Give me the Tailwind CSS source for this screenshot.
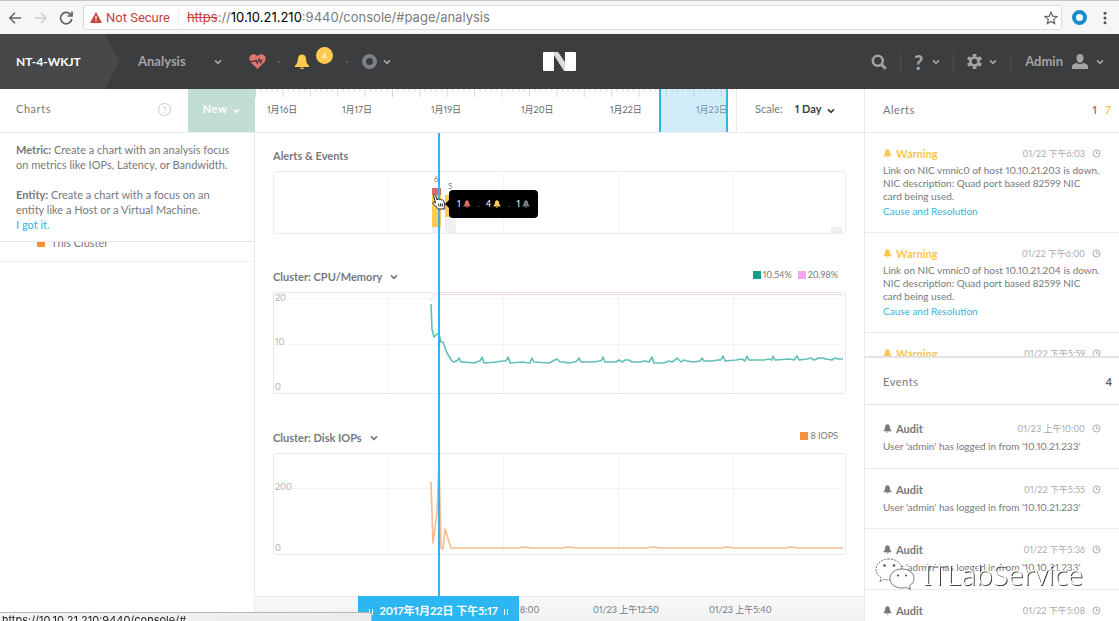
<!DOCTYPE html>
<html lang="en">
<head>
<meta charset="utf-8">
<title>Analysis</title>
<script src="https://cdn.jsdelivr.net/npm/@tailwindcss/browser@4"></script>
</head>
<body class="flex h-screen flex-col overflow-hidden bg-white font-['Lato','Noto_Sans_CJK_SC',sans-serif] text-[11px] text-[#77797c] proportional-nums">

<svg class="hidden" aria-hidden="true">
  <symbol id="bell" viewBox="0 0 16 16"><path fill="currentColor" d="M8 .5c-2.700 0-3.900 2-4.100 4.500C3.700 8 3.300 9.600 1 11.600V13h14v-1.400C12.700 9.600 12.300 8 12.100 5 11.900 2.500 10.700.5 8 .5zM5.800 13.800a2.300 2.100 0 0 0 4.400 0z"/></symbol>
  <symbol id="down" viewBox="0 0 8 6"><path fill="none" stroke="currentColor" stroke-width="1.700" d="M1 1.300l3 3 3-3"/></symbol>
  <symbol id="clock" viewBox="0 0 10 10"><circle cx="5" cy="5" r="3.900" fill="none" stroke="currentColor"/><path fill="none" stroke="currentColor" d="M5 2.800V5.200H7.200"/></symbol>
</svg>

<!-- Browser toolbar -->
<div class="flex h-[34px] shrink-0 items-center border-t border-[#c6c4c6] bg-[#f6f6f6] font-[Roboto,sans-serif] text-[#5f6164]">
  <button class="ml-2 size-4" aria-label="Back"><svg viewBox="0 0 16 16" fill="none" stroke="currentColor" stroke-width="1.500"><path d="M13 8H2M7 2.800L1.800 8 7 13.200"/></svg></button>
  <button class="ml-2 size-4 text-[#d0d0d0]" aria-label="Forward"><svg viewBox="0 0 16 16" fill="none" stroke="currentColor" stroke-width="1.500"><path d="M3 8h11M9 2.800L14.200 8 9 13.200"/></svg></button>
  <button class="ml-[10px] size-4" aria-label="Reload"><svg viewBox="0 0 16 16" fill="none" stroke="currentColor" stroke-width="1.700"><path d="M13 5A5.700 5.700 0 1 0 13.800 9M14 1.500V6H9.500"/></svg></button>
  <div class="ml-[9px] flex h-[25px] grow items-center rounded-[3px] border border-[#dcdcdc] bg-white text-[13px]">
    <svg class="ml-[6px] h-[11px] w-3" viewBox="0 0 12 11"><path fill="#c5433a" d="M6 0l6 11H0z"/><path stroke="#fff" stroke-width="1.200" d="M6 3.800v3.400M6 8.200v1.300"/></svg>
    <span class="ml-1 text-[#c5433a]">Not Secure</span>
    <span class="ml-2 h-4 w-px bg-[#eee]"></span>
    <span class="ml-2 font-[Inter,sans-serif] text-[#7b7b7b]"><s class="text-[#c5433a]">https</s>://<span class="text-black">10.10.21.210</span>:9440/console/#page/analysis</span>
    <button class="mr-[3px] ml-auto size-[14px]" aria-label="Bookmark"><svg viewBox="0 0 14 14" fill="none" stroke="currentColor" stroke-width="1.200"><path d="M7 1.200l1.700 4 4.300.4-3.300 2.800 1 4.200L7 10.400l-3.700 2.200 1-4.200L1 5.600l4.300-.4z"/></svg></button>
  </div>
  <button class="ml-[10px] size-[15px] rounded-full border-4 border-[#1b8bd0] bg-white" aria-label="Extension"></button>
  <button class="mx-2 size-4 text-[#555]" aria-label="Menu"><svg viewBox="0 0 16 16" fill="currentColor"><circle cx="10" cy="3.200" r="1.500"/><circle cx="10" cy="8" r="1.500"/><circle cx="10" cy="12.800" r="1.500"/></svg></button>
</div>

<!-- Application header -->
<header class="flex h-[55px] shrink-0 items-center bg-[#3c3d3e] text-[13px] font-bold text-[#a2a4a6]">
  <nav class="flex h-full flex-1 items-center pr-[15px]">
    <div class="flex h-full w-[120px] items-center bg-[#47484a] pl-4 text-[12px] text-white [clip-path:polygon(0_0,87%_0,100%_50%,87%_100%,0_100%)]">NT-4-WKJT</div>
    <button class="ml-[18px] flex w-[84px] items-center justify-between">Analysis<svg class="h-[6px] w-2"><use href="#down"/></svg></button>
    <span class="ml-3 h-5 w-px bg-[#434446]"></span>
    <svg class="ml-[14px] h-[15px] w-[17px]" viewBox="0 0 17 15"><path fill="#e2746f" d="M8.500 15L1.500 8C-.8 5 .3.500 4.400.2 6.200.1 7.700 1 8.500 2.400 9.300 1 10.800.1 12.600.2c4.100.3 5.200 4.800 2.900 7.800z"/><path fill="none" stroke="#46393b" stroke-width="1.200" d="M0 7.400h5.400L7 6l1.300 3.200L10.300 5l1.400 3.600 1.300-3.200"/></svg>
    <span class="ml-3 size-[2px] bg-[#5c5d60]"></span>
    <svg class="ml-[14px] size-4 text-[#fdcb4f]"><use href="#bell"/></svg>
    <span class="mb-3 ml-[6px] flex size-[17px] items-center justify-center rounded-full bg-[#fdcb4f] text-[8px] text-[#fff1cc]">4</span>
    <span class="ml-[13px] size-[2px] bg-[#5c5d60]"></span>
    <span class="ml-[14px] size-[15px] rounded-full border-4 border-[#7d8085]"></span>
    <svg class="ml-[6px] h-[6px] w-2"><use href="#down"/></svg>
  </nav>
  <svg class="h-[19px] w-[33px] shrink-0" viewBox="0 0 33 19"><path fill="#d9dadb" d="M9 0h6l13 19h-7z"/><path fill="#fff" d="M1 0h10v19H1q-1 0-1-1V1q0-1 1-1zM22 0h10q1 0 1 1v17q0 1-1 1H22z"/></svg>
  <div class="flex flex-1 items-center justify-end pr-[15px]">
    <button class="size-4" aria-label="Search"><svg viewBox="0 0 16 16" fill="none" stroke="currentColor"><circle cx="6.800" cy="6.800" r="5" stroke-width="2.500"/><path stroke-width="3" d="M10.500 10.500l4.300 4.300"/></svg></button>
    <span class="ml-[13px] h-5 w-px bg-[#4b4c4e]"></span>
    <button class="ml-[13px] flex items-center gap-[9px] text-[20px] leading-5 font-black" aria-label="Help"><span>?</span><svg class="h-[6px] w-2"><use href="#down"/></svg></button>
    <span class="ml-[13px] h-5 w-px bg-[#4b4c4e]"></span>
    <button class="ml-[13px] flex items-center gap-[7px]" aria-label="Settings"><svg class="size-[15px]" viewBox="0 0 16 16" fill="none" stroke="currentColor"><circle cx="8" cy="8" r="4.300" stroke-width="2.800"/><path stroke-width="4" d="M8 0v3M8 13v3M1 4l2.600 1.500M12.400 10.500L15 12M15 4l-2.600 1.500M3.600 10.500L1 12"/></svg><svg class="h-[6px] w-2"><use href="#down"/></svg></button>
    <span class="ml-[13px] h-5 w-px bg-[#4b4c4e]"></span>
    <button class="ml-[14px] flex items-center">Admin<svg class="ml-[9px] h-[15px] w-4" viewBox="0 0 16 15" fill="currentColor"><path d="M8 0c2.400 0 3.600 1.600 3.500 4C11.400 6.800 10 8.800 8 8.800S4.600 6.800 4.500 4C4.400 1.600 5.600 0 8 0zM0 15v-2.500C0 10.500 2 9.800 4.700 9c1.800 1.500 4.800 1.500 6.600 0C14 9.800 16 10.500 16 12.500V15z"/></svg><svg class="ml-2 h-[6px] w-2"><use href="#down"/></svg></button>
  </div>
</header>

<div class="flex min-h-0 grow">

  <!-- Charts sidebar -->
  <aside class="w-[255px] shrink-0 border-r border-[#e9eaeb]">
    <div class="flex h-[44px] items-stretch border-b border-[#ececee]">
      <div class="flex grow items-center justify-between pr-[17px] pb-[2px] pl-4 tracking-wider"><h2>Charts</h2><span class="flex size-[13px] items-center justify-center rounded-full border border-[#c8c9cb] text-[8px] tracking-normal text-[#bbb]">?</span></div>
      <button class="-mr-px flex w-[67px] items-center justify-center gap-[6px] bg-[#c1ddd4] pb-[2px] font-bold tracking-wider text-white">New<svg class="mt-[2px] h-[6px] w-[7px]"><use href="#down"/></svg></button>
    </div>
    <div class="border-b border-[#e3e4e6] px-4 pt-[9px] pb-[9px] text-[11px] leading-[15px]">
      <p><b>Metric:</b> Create a chart with an analysis focus<br>on metrics like IOPs, Latency, or Bandwidth.</p>
      <p class="mt-[15px]"><b>Entity:</b> Create a chart with a focus on an<br>entity like a Host or a Virtual Machine.</p>
      <a href="#" class="text-[#35b3e0]">I got it.</a>
    </div>
    <div class="h-5 overflow-hidden border-b border-[#f0f1f2] pl-[37px]">
      <div class="-mt-[6px] flex items-center gap-[6px] leading-[14px]"><span class="size-2 bg-[#f5923e]"></span>This Cluster</div>
    </div>
  </aside>

  <!-- Charts and timeline -->
  <main class="flex min-w-0 grow flex-col">
    <div class="flex h-[44px] shrink-0 border-b border-[#ececee]">
      <div class="relative grow text-[9px] text-[#65676a]">
        <svg class="h-2 w-full" viewBox="0 0 481 8" preserveAspectRatio="none">
          <defs><pattern id="ticks" width="27.400" height="8" patternUnits="userSpaceOnUse"><path stroke="#d4d6da" d="M.5 0v8M6 0v3M11.500 0v3M17 0v3M22.500 0v3"/></pattern></defs>
          <rect width="481" height="8" fill="url(#ticks)"/>
        </svg>
        <div class="flex pt-[5px] pl-3 leading-4 whitespace-nowrap">
          <span class="w-[75px]">1月16日</span><span class="w-[89px]">1月17日</span><span class="w-[90px]">1月19日</span><span class="w-[89px]">1月20日</span><span class="w-[86px]">1月22日</span><span>1月23日</span>
        </div>
        <div class="absolute inset-y-0 right-[8px] w-[69px] border-x-2 border-[#38b2e0] bg-[#8fd0f3]/40"></div>
      </div>
      <div class="flex w-[128px] shrink-0 items-center border-l border-[#ececee] pb-[2px] pl-[18px]">Scale:<button class="ml-3 flex items-center gap-[6px] font-bold text-[#3c3e41]">1 Day<svg class="mt-[2px] h-[6px] w-2"><use href="#down"/></svg></button></div>
    </div>

    <div class="relative flex min-h-0 grow flex-col px-[18px]">
      <h3 class="mt-4 leading-[14px] font-bold">Alerts &amp; Events</h3>
      <div class="relative mt-2 h-[63px] shrink-0 rounded-[3px] border border-[#ececee]">
        <svg class="size-full" viewBox="0 0 571 61" preserveAspectRatio="none">
          <path stroke="#f5f5f6" d="M114.500 0v61M229.500 0v61M344.500 0v61M459.500 0v61"/>
          <path fill="#d56f68" d="M158 16h9v7h-9z"/><path fill="#fbcb55" d="M158 23h9v32h-9zM171 23h11v22h-11z"/><path fill="#f0f0f1" d="M158 55h9v6h-9zM171 45h11v16h-11zM557 55h11v6h-11z"/>
        </svg>
        <span class="absolute top-0 left-[160px] text-[8px] leading-[14px]">6</span>
        <span class="absolute top-[7px] left-[174px] text-[8px] leading-[14px]">5</span>
      </div>

      <div class="mt-[34px] flex items-center justify-between leading-[14px]">
        <button class="flex items-center gap-2 font-bold">Cluster: CPU/Memory<svg class="h-[6px] w-2"><use href="#down"/></svg></button>
        <div class="mr-2 mb-1 flex items-center gap-[6px] text-[9px]"><span class="flex items-center gap-[2px]"><i class="size-2 bg-[#189a8d]"></i>10.54%</span><span class="flex items-center gap-[2px]"><i class="size-2 bg-[#f5a4ee]"></i>20.98%</span></div>
      </div>
      <div class="relative mt-[6px] h-[102px] shrink-0 rounded-[3px] border border-[#e9e9ec] text-[9px] text-[#b2b3b6]">
        <svg class="size-full" viewBox="0 0 571 100" preserveAspectRatio="none" fill="none">
          <path stroke="#f5f5f6" d="M114.500 0v100M229.500 0v100M344.500 0v100M459.500 0v100M0 5.500h571M0 51.500h571"/>
          <path stroke="#f6d8f4" d="M157 8l2-6.500h409"/>
          <path stroke="#62bfb5" stroke-width="1.600" stroke-linejoin="round" d="M157 11L158 36 160 44 163 41H165L167 49H169L173 60 178 68 180 69 182 68H183L185 65 187 69H190L200 70 205 68H206L208 64 210 70 223 69 228 68H232L234 64 236 70 249 69 254 70H256L258 65 260 69 275 70 279 68 283 66 286 69 290 69 294 70 300 69 303 68 305 65 307 69 320 69 325 68H327L329 64 331 69 342 69 345 67 348 69 351 67 355 67 358 69 366 69 371 68 375 69 378 64 380 70 390 70 395 68 398 69 401 67 403 65 407 69 410 67 413 68 420 69 426 68 428 65 430 68 438 68 444 67 447 67 449 63 451 68 462 67 468 66 471 68 473 63 475 67 490 67 495 66 498 67 499 63 501 67 515 66 520 67 523 63 525 67 533 66 537 65 540 67 545 65 549 65 552 66 558 67 561 65 564 66 569 66"/>
        </svg>
        <span class="absolute top-0 left-px leading-[10px]">20</span><span class="absolute top-[44px] left-px leading-[10px]">10</span><span class="absolute bottom-px left-px leading-[10px]">0</span>
      </div>

      <div class="mt-[35px] flex items-center justify-between leading-[14px]">
        <button class="flex items-center gap-2 font-bold">Cluster: Disk IOPs<svg class="h-[6px] w-2"><use href="#down"/></svg></button>
        <div class="mr-2 mb-1 flex items-center gap-[2px] text-[9px]"><i class="size-2 bg-[#f5923e]"></i>8 IOPS</div>
      </div>
      <div class="relative mt-[6px] h-[102px] shrink-0 rounded-[3px] border border-[#e9e9ec] text-[9px] text-[#b2b3b6]">
        <svg class="size-full" viewBox="0 0 571 100" preserveAspectRatio="none" fill="none">
          <path stroke="#f5f5f6" d="M114.500 0v100M229.500 0v100M344.500 0v100M459.500 0v100M0 34.500h571"/>
          <path stroke="#f5bd92" stroke-width="1.700" stroke-linejoin="round" d="M157 28l2 61 4-30 2-50 2 85 2 1 2-20 6 19h68l5-1 8 1h30l6-1 8 1h70l7-1 8 1h60l6-1 8 1h50l6-1 6 1h46"/>
        </svg>
        <span class="absolute top-[28px] left-px leading-[10px]">200</span><span class="absolute bottom-px left-px leading-[10px]">0</span>
      </div>

      <!-- Time cursor, tooltip and pointer -->
      <div class="absolute inset-y-0 left-[183px] w-[2px] bg-[#38b2e8]"></div>
      <div class="absolute top-[57px] left-[194px] flex h-7 w-[89px] items-center justify-between rounded-[4px] bg-black px-2 text-[9px] text-white">
        <span class="absolute top-[10px] -left-1 h-2 w-1 bg-black [clip-path:polygon(100%_0,0_50%,100%_100%)]"></span>
        <span class="flex items-center">1<svg class="ml-[2px] size-2 text-[#d96c66]"><use href="#bell"/></svg></span><span class="text-[#777]">.</span>
        <span class="flex items-center">4<svg class="ml-[2px] size-2 text-[#fbcb55]"><use href="#bell"/></svg></span><span class="text-[#777]">.</span>
        <span class="flex items-center">1<svg class="ml-[2px] size-2 text-[#77797c]"><use href="#bell"/></svg></span>
      </div>
      <svg class="absolute top-[61px] left-[177px] h-4 w-[14px]" viewBox="0 0 14 16"><path fill="#fff" stroke="#222" d="M3.500 9L1.700 2C1.300.5 3 .2 3.600 1.500L5.200 6c.2-1.200 1.700-1.200 2.200-.2.500-.9 1.900-.7 2.200.3.600-.7 1.700-.3 2 .7l1 3.200c.3 1.800-.1 2.600-.3 3.500V15H6.500C5 13 3 12.200.8 9.500.2 8.300 1.500 7.500 3.500 9z"/><path stroke="#222" d="M6.500 9.500l.5 3M8.500 9.500l.3 3M10.300 9.500v3"/></svg>
    </div>

    <div class="relative flex h-[25px] shrink-0 items-center border-t border-[#e6e8ea] bg-linear-to-b from-[#f8f9fa] to-[#eff1f3] pt-[2px] pl-[265px] text-[9px] whitespace-nowrap">
      <span class="w-[73px]">8:00</span><span class="w-[116px]">01/23 上午12:50</span><span>01/23 上午5:40</span>
      <div class="absolute -top-px bottom-0 left-[103px] flex w-[161px] items-center justify-center gap-[6px] bg-[#2db7f2] pt-[6px] text-[11px] font-bold text-white"><span class="h-[6px] w-1 border-x border-white"></span>2017年1月22日 下午5:17<span class="h-[6px] w-1 border-x border-white"></span></div>
    </div>
  </main>

  <!-- Alerts and events -->
  <aside class="flex w-[255px] shrink-0 flex-col border-l border-[#e9eaeb] text-[10px] leading-[13px]">
    <div class="flex h-[44px] shrink-0 items-center justify-between border-b border-[#ececee] pr-2 pb-[2px] pl-[18px] text-[11px]"><h2 class="tracking-wider">Alerts</h2><span class="flex gap-2 font-bold"><span class="text-[#d1635c]">1</span><span class="text-[#f8c34c]">7</span></span></div>
    <div class="h-[223px] shrink-0 overflow-hidden">
      <article class="h-[100px] border-b border-[#ececee] pt-[14px] pl-[18px]">
        <div class="flex items-center pr-[18px]"><svg class="size-[9px] text-[#fbc650]"><use href="#bell"/></svg><b class="ml-1 text-[11px] text-[#fbc650]">Warning</b><time class="ml-auto text-[9px] text-[#a9abae]">01/22 下午6:03</time><svg class="ml-[7px] size-[9px] text-[#a0a2a5]"><use href="#clock"/></svg></div>
        <p class="mt-1">Link on NIC vmnic0 of host 10.10.21.203 is down.<br>NIC description: Quad port based 82599 NIC<br>card being used.</p>
        <a href="#" class="mt-[2px] block text-[#35b3e0]">Cause and Resolution</a>
      </article>
      <article class="h-[100px] border-b border-[#ececee] pt-[14px] pl-[18px]">
        <div class="flex items-center pr-[18px]"><svg class="size-[9px] text-[#fbc650]"><use href="#bell"/></svg><b class="ml-1 text-[11px] text-[#fbc650]">Warning</b><time class="ml-auto text-[9px] text-[#a9abae]">01/22 下午6:00</time><svg class="ml-[7px] size-[9px] text-[#a0a2a5]"><use href="#clock"/></svg></div>
        <p class="mt-1">Link on NIC vmnic0 of host 10.10.21.204 is down.<br>NIC description: Quad port based 82599 NIC<br>card being used.</p>
        <a href="#" class="mt-[2px] block text-[#35b3e0]">Cause and Resolution</a>
      </article>
      <article class="pt-[14px] pl-[18px]">
        <div class="flex items-center pr-[18px]"><svg class="size-[9px] text-[#fbc650]"><use href="#bell"/></svg><b class="ml-1 text-[11px] text-[#fbc650]">Warning</b><time class="ml-auto text-[9px] text-[#a9abae]">01/22 下午5:59</time><svg class="ml-[7px] size-[9px] text-[#a0a2a5]"><use href="#clock"/></svg></div>
      </article>
    </div>
    <div class="flex h-[49px] shrink-0 items-center justify-between border-t-2 border-b border-t-[#e2e3e5] border-b-[#dfe0e2] pr-[7px] pl-[18px] text-[11px]"><h2 class="tracking-wider">Events</h2><b class="text-[#606265]">4</b></div>
    <div class="min-h-0 grow overflow-hidden pt-[3px]">
      <article class="h-[61px] border-b border-[#ececee] pt-[14px] pl-[18px]">
        <div class="flex items-center pr-[18px]"><svg class="size-[9px]"><use href="#bell"/></svg><b class="ml-1 text-[11px]">Audit</b><time class="ml-auto text-[9px] text-[#a9abae]">01/23 上午10:00</time><svg class="ml-[7px] size-[9px] text-[#a0a2a5]"><use href="#clock"/></svg></div>
        <p class="mt-[5px]">User 'admin' has logged in from '10.10.21.233'</p>
      </article>
      <article class="h-[60px] border-b border-[#ececee] pt-[14px] pl-[18px]">
        <div class="flex items-center pr-[18px]"><svg class="size-[9px]"><use href="#bell"/></svg><b class="ml-1 text-[11px]">Audit</b><time class="ml-auto text-[9px] text-[#a9abae]">01/22 下午5:55</time><svg class="ml-[7px] size-[9px] text-[#a0a2a5]"><use href="#clock"/></svg></div>
        <p class="mt-[5px]">User 'admin' has logged in from '10.10.21.233'</p>
      </article>
      <article class="h-[61px] border-b border-[#ececee] pt-[14px] pl-[18px]">
        <div class="flex items-center pr-[18px]"><svg class="size-[9px]"><use href="#bell"/></svg><b class="ml-1 text-[11px]">Audit</b><time class="ml-auto text-[9px] text-[#a9abae]">01/22 下午5:36</time><svg class="ml-[7px] size-[9px] text-[#a0a2a5]"><use href="#clock"/></svg></div>
        <p class="mt-[5px]">User 'admin' has logged in from '10.10.21.233'</p>
      </article>
      <article class="pt-[14px] pl-[18px]">
        <div class="flex items-center pr-[18px]"><svg class="size-[9px]"><use href="#bell"/></svg><b class="ml-1 text-[11px]">Audit</b><time class="ml-auto text-[9px] text-[#a9abae]">01/22 下午5:08</time><svg class="ml-[7px] size-[9px] text-[#a0a2a5]"><use href="#clock"/></svg></div>
      </article>
    </div>
  </aside>
</div>

<!-- Link status bubble -->
<div class="fixed bottom-0 left-0 h-[9px] w-[372px] overflow-hidden rounded-tr-[3px] border-t border-r border-[#b5b5b5] bg-linear-to-r from-[#f4f4f4] to-[#ebebeb] pl-[2px] font-[Inter,sans-serif] text-[11px] leading-[15px] text-[#222]">https://10.10.21.210:9440/console/#</div>

<!-- Watermark -->
<div class="pointer-events-none fixed right-9 bottom-[29px] flex items-center gap-2 font-['Noto_Sans',sans-serif] text-[28px] leading-9 font-light text-white [text-shadow:1px_1px_0_#444]">
  <svg class="h-8 w-10" viewBox="0 0 40 32" fill="#fff" stroke="#555" stroke-width=".8"><path stroke-dasharray="2 1" d="M14 1C6.500 1 1 5.500 1 11.500c0 3.500 2 6.200 5 8.200l-1.200 4 4.500-2.400c8 2.200 17.500-1.500 17.500-10.300C26.500 5 21 1 14 1z"/><path d="M27 11c-7 0-12 4-12 9.500S20 30 27 30c1.500 0 3-.2 4.300-.6L35.500 31.500l-1-3.600c2.700-1.800 4.500-4.300 4.500-7.400C39 15 34 11 27 11z"/><g fill="#555" stroke="none"><circle cx="9.500" cy="7.500" r="1.300"/><circle cx="19" cy="7.500" r="1.300"/><circle cx="23" cy="17.500" r="1.100"/><circle cx="31" cy="17.500" r="1.100"/></g></svg>
  <span>ITLabService</span>
</div>
</body>
</html>
